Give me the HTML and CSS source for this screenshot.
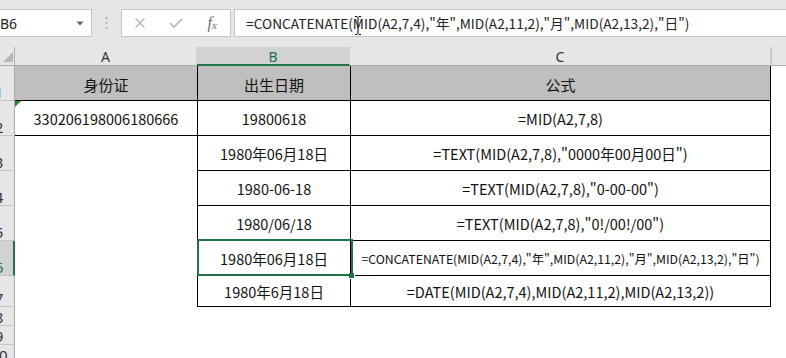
FILE: index.html
```html
<!DOCTYPE html>
<html lang="zh-CN">
<head>
<meta charset="utf-8">
<title>Excel</title>
<link rel="stylesheet" href="styles.css">
</head>
<body>
<div class="app">
  <div class="fbar">
    <div class="namebox">
      <span class="nb-text">B6</span>
      <svg class="nb-arrow" width="8" height="5" viewBox="0 0 8 5"><path d="M0.5 0.5 L7.5 0.5 L4 4.5 Z" fill="#666"/></svg>
    </div>
    <div class="grip">
      <svg width="3" height="13" viewBox="0 0 3 13"><rect x="0.5" y="0" width="2" height="2" fill="#b5b5b5"/><rect x="0.5" y="5" width="2" height="2" fill="#b5b5b5"/><rect x="0.5" y="10" width="2" height="2" fill="#b5b5b5"/></svg>
    </div>
    <div class="fbtns">
      <div class="fbtn">
        <svg width="12" height="10" viewBox="0 0 12 10"><path d="M1.5 0.5 L10.5 9.5 M10.5 0.5 L1.5 9.5" stroke="#b3b3b3" stroke-width="1.3" fill="none"/></svg>
      </div>
      <div class="fbtn">
        <svg width="14" height="10" viewBox="0 0 14 10"><path d="M1 5 L5 9 L13 1" stroke="#b3b3b3" stroke-width="1.6" fill="none"/></svg>
      </div>
      <div class="fbtn fx"><span class="fx-f">f</span><span class="fx-x">x</span></div>
    </div>
    <div class="finput">
      <span class="ftext">=CONCATENATE(MID(A2,7,4),"年",MID(A2,11,2),"月",MID(A2,13,2),"日")</span>
      <svg class="ibeam" width="8" height="19" viewBox="0 0 8 19"><path d="M1 0.5 H3 L4 1.5 L5 0.5 H7 M4 1.5 V17.5 M1 18.5 H3 L4 17.5 L5 18.5 H7" stroke="#000" stroke-width="1" fill="none"/></svg>
    </div>
  </div>

  <div class="sheet">
    <!-- column headers -->
    <div class="corner"><svg width="15" height="18" viewBox="0 0 15 18"><path d="M3 15 L13 15 L13 5 Z" fill="#b6b6b6"/></svg></div>
    <div class="ch">A</div>
    <div class="ch ch-sel">B</div>
    <div class="ch">C</div>
    <div class="ch ch-last"></div>

    <!-- row 1 -->
    <div class="rh"><span>1</span></div>
    <div class="c a hd">身份证</div>
    <div class="c b hd">出生日期</div>
    <div class="c cc hd">公式</div>
    <div class="c d"></div>

    <!-- row 2 -->
    <div class="rh"><span>2</span></div>
    <div class="c a a2"><i class="tri"></i>330206198006180666</div>
    <div class="c b">19800618</div>
    <div class="c cc">=MID(A2,7,8)</div>
    <div class="c d"></div>

    <!-- row 3 -->
    <div class="rh"><span>3</span></div>
    <div class="c e"></div>
    <div class="c b">1980年06月18日</div>
    <div class="c cc">=TEXT(MID(A2,7,8),"0000年00月00日")</div>
    <div class="c d"></div>

    <!-- row 4 -->
    <div class="rh"><span>4</span></div>
    <div class="c e"></div>
    <div class="c b">1980-06-18</div>
    <div class="c cc">=TEXT(MID(A2,7,8),"0-00-00")</div>
    <div class="c d"></div>

    <!-- row 5 -->
    <div class="rh"><span>5</span></div>
    <div class="c e"></div>
    <div class="c b">1980/06/18</div>
    <div class="c cc">=TEXT(MID(A2,7,8),"0!/00!/00")</div>
    <div class="c d"></div>

    <!-- row 6 -->
    <div class="rh rh-sel"><span>6</span></div>
    <div class="c e"></div>
    <div class="c b sel">1980年06月18日<i class="selbox"></i><i class="handle"></i></div>
    <div class="c cc small">=CONCATENATE(MID(A2,7,4),"年",MID(A2,11,2),"月",MID(A2,13,2),"日")</div>
    <div class="c d"></div>

    <!-- row 7 -->
    <div class="rh"><span>7</span></div>
    <div class="c e"></div>
    <div class="c b">1980年6月18日</div>
    <div class="c cc">=DATE(MID(A2,7,4),MID(A2,11,2),MID(A2,13,2))</div>
    <div class="c d"></div>

    <!-- rows 8-10 -->
    <div class="rh"><span>8</span></div>
    <div class="c e"></div><div class="c e"></div><div class="c e"></div><div class="c e"></div>
    <div class="rh"><span>9</span></div>
    <div class="c e"></div><div class="c e"></div><div class="c e"></div><div class="c e"></div>
    <div class="rh"><span>10</span></div>
    <div class="c e"></div><div class="c e"></div><div class="c e"></div><div class="c e"></div>
  </div>
</div>
</body>
</html>
```

FILE: styles.css
```css
* {
  box-sizing: border-box;
  margin: 0;
  padding: 0;
}

html, body {
  width: 786px;
  height: 358px;
  overflow: hidden;
  background: #ffffff;
}

body {
  font-family: "Noto Sans CJK SC", "Noto Sans", sans-serif;
  color: #111;
}

.app {
  width: 786px;
  height: 358px;
  overflow: hidden;
}

/* ---------- formula bar ---------- */
.fbar {
  height: 47px;
  background: #e6e6e6;
  display: flex;
  align-items: flex-start;
  padding-top: 9px;
}

.namebox {
  width: 94px;
  height: 28px;
  margin-left: -1px;
  background: #fff;
  border: 1px solid #c6c6c6;
  display: flex;
  align-items: center;
  font-family: "Noto Sans", sans-serif;
  font-size: 14px;
  color: #222;
}

.nb-text {
  margin-left: 0px;
  flex: 1;
}

.nb-arrow {
  margin-right: 7px;
  margin-top: 1px;
}

.grip {
  width: 30px;
  height: 28px;
  display: flex;
  align-items: center;
  justify-content: center;
}

.fbtns {
  width: 110px;
  height: 28px;
  background: #fff;
  border: 1px solid #c6c6c6;
  display: flex;
}

.fbtn {
  width: 36px;
  height: 26px;
  display: flex;
  align-items: center;
  justify-content: center;
}

.fx {
  font-family: "Liberation Serif", serif;
  font-style: italic;
  color: #6e6e6e;
  font-size: 15px;
}

.fx-f {
  font-size: 16px;
}

.fx-x {
  font-size: 11px;
  margin-top: 4px;
}

.finput {
  position: relative;
  margin-left: 3px;
  width: 560px;
  height: 28px;
  background: #fff;
  border: 1px solid #c6c6c6;
  border-right: none;
  display: flex;
  align-items: center;
  padding-left: 11px;
  font-family: "Noto Sans CJK SC", sans-serif;
  font-size: 13.7px;
  color: #222;
  white-space: nowrap;
}

.ibeam {
  position: absolute;
  left: 119px;
  top: 6px;
}

/* ---------- sheet ---------- */
.sheet {
  display: grid;
  grid-template-columns: 15px 182px 153px 421px 15px;
  grid-template-rows: 19px 35px 35px 35px 35px 35px 35px 31px 19px 19px 19px;
}

.corner {
  background: #e6e6e6;
  border-right: 1px solid #ababab;
  border-bottom: 1px solid #ababab;
  overflow: hidden;
}

.corner svg {
  display: block;
}

.ch {
  background: #e6e6e6;
  border-right: 1px solid #d0d0d0;
  border-bottom: 1px solid #ababab;
  display: flex;
  align-items: center;
  justify-content: center;
  font-family: "Noto Sans", sans-serif;
  font-size: 14px;
  color: #333;
  padding-top: 1px;
}

.ch-sel {
  background: #d2d2d2;
  color: #217346;
  border-bottom: 2px solid #217346;
  padding-top: 2px;
}

.ch-last {
  border-right: none;
  border-left: 1px solid #c6c6c6;
}

.rh {
  background: #e6e6e6;
  border-right: 1px solid #ababab;
  border-bottom: 1px solid #c6c6c6;
  overflow: hidden;
  display: flex;
  flex-direction: column;
  justify-content: flex-end;
  align-items: flex-start;
  font-family: "Noto Sans", sans-serif;
  font-size: 15px;
  line-height: 16px;
  color: #333;
}

.rh span {
  display: block;
  width: 30px;
  margin-left: -16px;
  text-align: center;
}

.rh-sel {
  background: #d2d2d2;
  border-right: 2px solid #217346;
  color: #217346;
}

.c {
  display: flex;
  align-items: center;
  justify-content: center;
  font-size: 14.5px;
  color: #111;
  white-space: nowrap;
  background: #fff;
}

.a {
  border-bottom: 1px solid #000;
}

.b {
  border-left: 1px solid #000;
  border-bottom: 1px solid #000;
}

.cc {
  border-left: 1px solid #000;
  border-right: 1px solid #000;
  border-bottom: 1px solid #000;
}

.hd {
  background: #bfbfbf;
  font-size: 15px;
  padding-top: 2px;
}

.small {
  font-size: 12.3px;
  padding-top: 1px;
}

.a2 {
  position: relative;
}

.tri {
  position: absolute;
  left: 0;
  top: 0;
  width: 0;
  height: 0;
  border-top: 6px solid #1e8c3c;
  border-right: 6px solid transparent;
}

.sel {
  position: relative;
}

.selbox {
  position: absolute;
  left: -1px;
  top: -2px;
  width: 156px;
  height: 37px;
  border: 2px solid #217346;
}

.handle {
  position: absolute;
  left: 151px;
  top: 32px;
  width: 6px;
  height: 6px;
  background: #217346;
  border-right: 1px solid #fff;
  border-bottom: 1px solid #fff;
}
```
